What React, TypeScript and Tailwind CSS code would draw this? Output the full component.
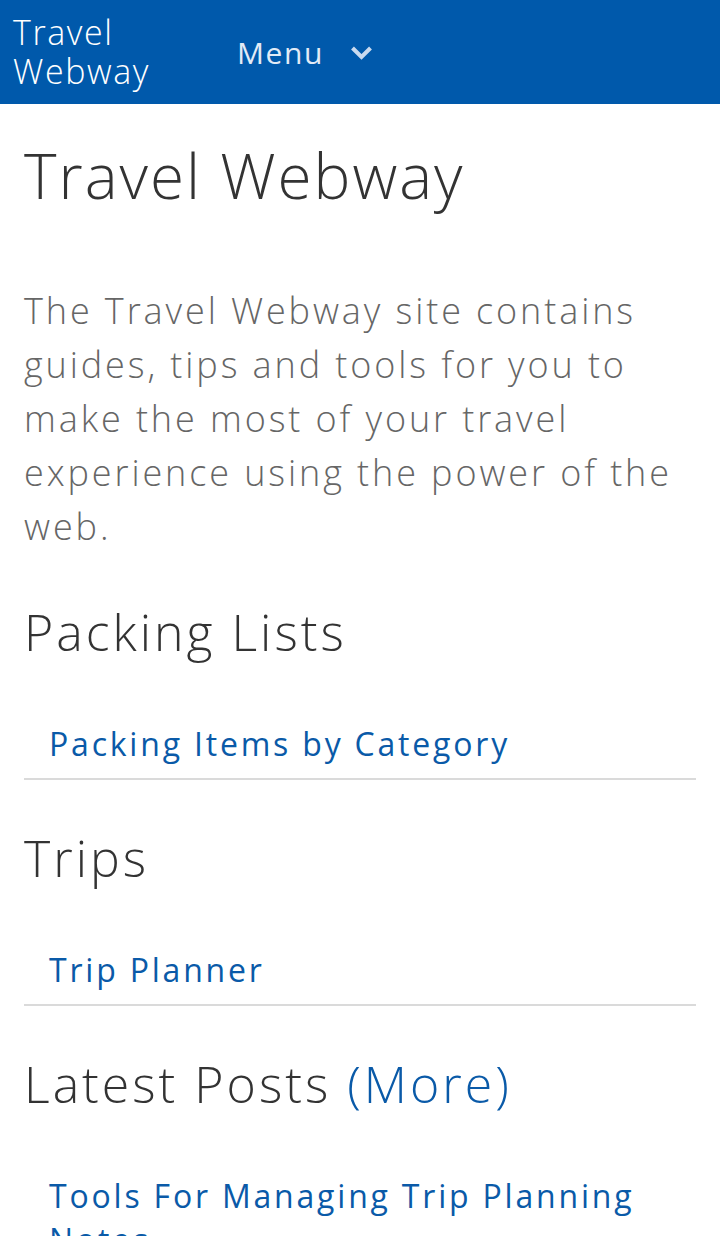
import React from 'react';

const linkCls = "text-[#0a5aa8] text-[32px] leading-[44px] tracking-[2.8px]";
const h2Cls = "mt-[48px] text-[50px] leading-[60px] font-light text-[#333333] tracking-[3px]";

function LinkList({ items }: { items: string[] }) {
  return (
    <ul className="mt-[60px]">
      {items.map(item => (
        <li key={item} className="pl-[25px] pr-[40px] pb-[12px] border-b-2 border-[#dadada]">
          <a href="#" className={linkCls}>{item}</a>
        </li>
      ))}
    </ul>
  );
}

export default function App() {
  return (
    <div className="min-h-screen bg-white" style={{ fontFamily: '"Open Sans", sans-serif' }}>
      {/* Top bar */}
      <header className="h-[104px] bg-[#0059ab] flex items-center text-white">
        <a href="#" className="w-[237px] pl-[13px] text-[34px] leading-[39px] font-light tracking-[1.6px]">
          Travel<br />Webway
        </a>
        <button className="flex items-center gap-[26px] text-[30px] font-normal tracking-[1.6px] text-[#e2ebf6]">
          Menu
          <svg width="23" height="16" viewBox="0 0 23 16" className="mt-[1px]">
            <path d="M2.5 3 L11.5 12 L20.5 3" fill="none" stroke="#c9daef" strokeWidth="4" />
          </svg>
        </button>
      </header>

      <main className="px-[24px]">
        <h1 className="mt-[34px] text-[62px] leading-[74px] font-light text-[#333333] tracking-[2px]">Travel Webway</h1>
        <p className="mt-[72px] text-[36px] leading-[54px] font-light text-[#666666] tracking-[2.9px]">
          The Travel Webway site contains guides, tips and tools for you to make the most of your travel experience using the power of the web.
        </p>

        <h2 className={h2Cls}>Packing Lists</h2>
        <LinkList items={["Packing Items by Category"]} />

        <h2 className={h2Cls}>Trips</h2>
        <LinkList items={["Trip Planner"]} />

        <h2 className={h2Cls}>
          Latest Posts <a href="#" className="text-[#0a5aa8]">(More)</a>
        </h2>
        <LinkList items={["Tools For Managing Trip Planning Notes"]} />
      </main>
    </div>
  );
}
